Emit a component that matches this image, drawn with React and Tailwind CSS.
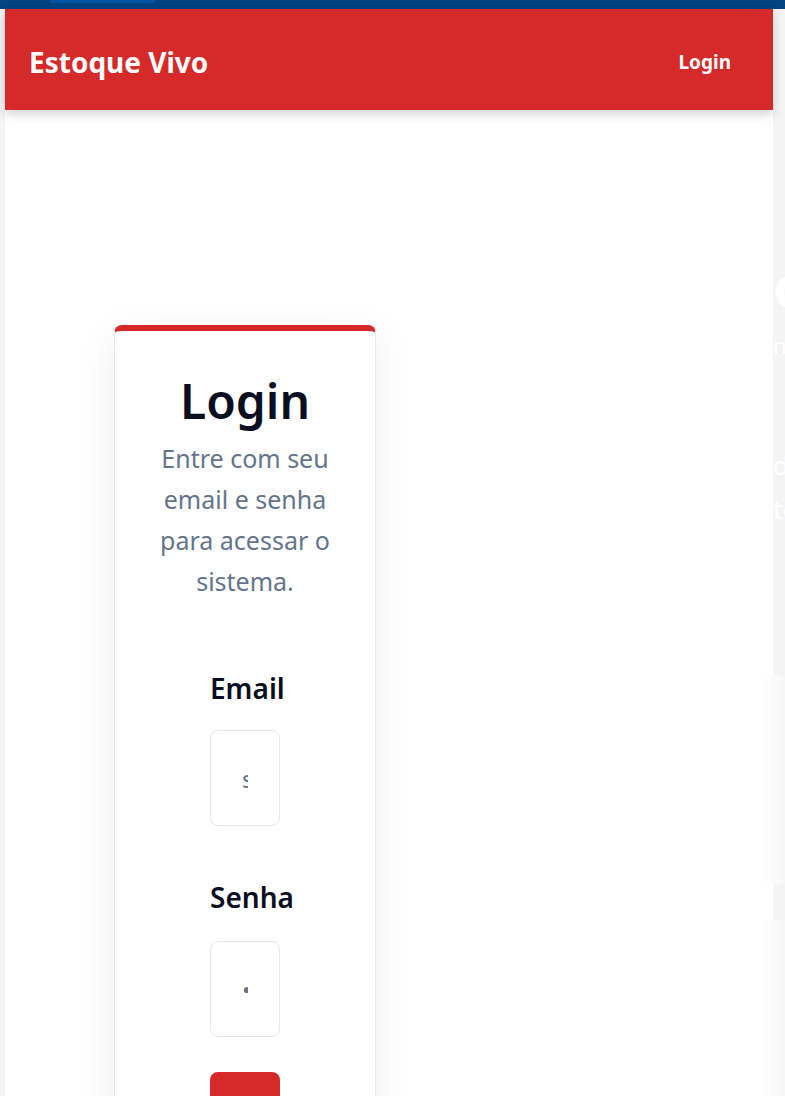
export default function App() {
  const font = { fontFamily: '"Noto Sans", "Open Sans", Arial, sans-serif' };
  return (
    <div className="relative min-h-screen w-[785px] overflow-hidden bg-[#f4f4f4]" style={font}>
      <div className="relative h-[9px] bg-[#024484]">
        <div className="absolute left-[50px] top-0 h-[3px] w-[105px] rounded-b-md bg-[#0054a6]" />
      </div>
      <div className="relative ml-[5px] min-h-[1087px] w-[768px] bg-white">
        <header className="relative z-10 flex h-[101px] items-center justify-between bg-[#d62a2a] pl-[24px] pr-[42px] pt-[5px] shadow-[0_4px_10px_rgba(0,0,0,0.18)]">
          <span className="text-[28px] font-bold text-white">Estoque Vivo</span>
          <a className="text-[19px] font-bold text-white">Login</a>
        </header>
        <main className="flex">
          <section className="flex w-[480px] shrink-0 justify-center pt-[215px]">
            <div className="w-[262px] rounded-lg border border-t-[6px] border-[#e2e8f0] border-t-[#d62a2a] bg-white px-[36px] pt-[40px] pb-[40px] text-center shadow-[0_10px_40px_rgba(0,0,0,0.07)]">
              <h1 className="text-[48px] font-semibold leading-[60px] text-[#0a0f1f]">Login</h1>
              <p className="mt-[7px] text-[25px] leading-[41px] text-[#64748b]">Entre com seu email e senha para acessar o sistema.</p>
              <form className="mt-[65px] flex flex-col items-center text-left">
                <div className="w-[70px]">
                  <label className="block whitespace-nowrap text-[28px] font-semibold text-[#0a0f1f]">Email</label>
                  <input
                    type="email"
                    placeholder="seu@email.com"
                    className="mt-[21px] h-[96px] w-[70px] rounded-lg border border-[#e2e8f0] px-[31px] text-[24px] text-[#64748b] placeholder:text-[#64748b]"
                  />
                  <label className="mt-[50px] block whitespace-nowrap text-[28px] font-semibold text-[#0a0f1f]">Senha</label>
                  <input
                    type="password"
                    defaultValue="••••••"
                    className="mt-[23px] h-[96px] w-[70px] rounded-lg border border-[#e2e8f0] px-[31px] text-[24px] text-[#64748b]"
                  />
                  <button type="button" className="mt-[35px] h-[96px] w-[70px] rounded-lg bg-[#d62a2a] text-[24px] text-white">Entrar</button>
                </div>
              </form>
            </div>
          </section>
          <section className="ml-[288px] w-[400px] shrink-0 pt-[140px] text-white">
            <h2 className="whitespace-nowrap text-[56px] font-bold leading-[70px]">organize seu estoque</h2>
            <p className="mt-[5px] whitespace-nowrap text-[22px] leading-[40px]">no controle</p>
            <p className="mt-[78px] whitespace-nowrap text-[26px] leading-[44px]">de produtos</p>
            <p className="whitespace-nowrap text-[26px] leading-[44px]">todos os dias</p>
          </section>
        </main>
      </div>
      <div className="absolute left-[763px] top-[675px] h-[210px] w-[22px] bg-gradient-to-r from-white to-[#f6f6f6]" />
      <div className="absolute left-[763px] top-[920px] h-[176px] w-[22px] bg-gradient-to-r from-white to-[#f6f6f6]" />
    </div>
  );
}
